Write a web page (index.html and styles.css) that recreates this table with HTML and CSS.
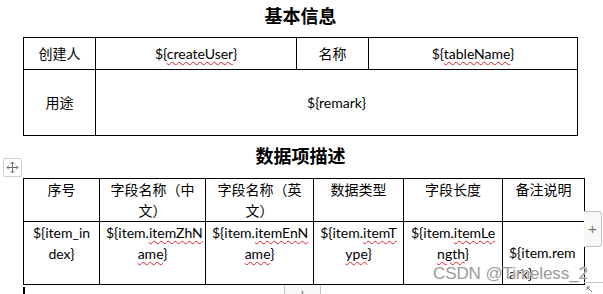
FILE: index.html
```html
<!DOCTYPE html>
<html lang="zh">
<head>
<meta charset="utf-8">
<title>数据项描述</title>
<link rel="stylesheet" href="styles.css">
</head>
<body>
<div class="page">
  <h1 class="doc-title first">基本信息</h1>
  <table class="grid info">
    <colgroup><col class="w72"><col class="w201"><col class="w72"><col class="w209"></colgroup>
    <tr class="row-a">
      <td>创建人</td>
      <td>${<span class="spell">createUser</span>}</td>
      <td>名称</td>
      <td>${<span class="spell">tableName</span>}</td>
    </tr>
    <tr class="row-b">
      <td>用途</td>
      <td colspan="3">${remark}</td>
    </tr>
  </table>

  <h2 class="doc-title second">数据项描述</h2>
  <table class="grid items">
    <colgroup><col class="w76"><col class="w106"><col class="w108"><col class="w90"><col class="w99"><col class="w82"></colgroup>
    <tr class="row-head">
      <th>序号</th>
      <th>字段名称（中<br>文）</th>
      <th>字段名称（英<br>文）</th>
      <th>数据类型</th>
      <th>字段长度</th>
      <th>备注说明</th>
    </tr>
    <tr class="row-body">
      <td>${item_in<br>dex}</td>
      <td>${item.<span class="spell">itemZhN</span><br><span class="spell">ame</span>}</td>
      <td>${item.<span class="spell">itemEnN</span><br><span class="spell">ame</span>}</td>
      <td>${item.<span class="spell">itemT</span><br><span class="spell">ype</span>}</td>
      <td>${item.<span class="spell">itemLe</span><br><span class="spell">ngth</span>}</td>
      <td class="remark">${item.rem<br>ark}</td>
    </tr>
  </table>
  <div class="after-table"><span class="caret"></span></div>

  <span class="move-handle" aria-hidden="true">
    <svg viewBox="0 0 13 13" width="13" height="13"><path d="M6.5 1v11M1 6.5h11M4.5 3l2-2 2 2M4.5 10l2 2 2-2M3 4.5l-2 2 2 2M10 4.5l2 2-2 2" stroke="#6f6f6f" stroke-width="1" fill="none"/></svg>
  </span>
  <button class="add-col" type="button">+</button>
  <button class="add-row" type="button">+</button>
  <span class="tail-line"></span>
  <span class="resize" aria-hidden="true">
    <svg viewBox="0 0 7 7" width="7" height="7"><path d="M1 1l5 5M1 1h3M1 1v3" stroke="#777" stroke-width="1" fill="none"/></svg>
  </span>
  <div class="watermark">CSDN @Timeless_2</div>
</div>
</body>
</html>
```

FILE: styles.css
```css
html, body {
  margin: 0;
  padding: 0;
  background: #fff;
}

.page {
  position: relative;
  width: 603px;
  height: 294px;
  overflow: hidden;
  font-family: Lato, "Noto Sans CJK SC", sans-serif;
  font-size: 14px;
  color: #000;
}

.doc-title {
  margin: 0;
  width: 555px;
  margin-left: 23px;
  font-family: "Noto Sans CJK SC", sans-serif;
  font-weight: 700;
  font-size: 18px;
  line-height: 31px;
  text-align: center;
}

.doc-title.first {
  margin-bottom: 6px;
}

.doc-title.second {
  margin-top: 4px;
  margin-bottom: 7px;
}

.grid {
  border-collapse: collapse;
  table-layout: fixed;
  margin-left: 23px;
}

.grid td,
.grid th {
  border: 1px solid #000;
  padding: 0 6px;
  text-align: center;
  font-weight: 400;
  line-height: 21px;
}

.info { width: 555px; }
.info td { vertical-align: middle; }
.row-a { height: 32px; }
.row-b { height: 66px; }

.w72 { width: 72px; }
.w201 { width: 201px; }
.w209 { width: 209px; }

.items { width: 562px; }
.w76 { width: 76px; }
.w106 { width: 106px; }
.w108 { width: 108px; }
.w90 { width: 90px; }
.w99 { width: 99px; }
.w82 { width: 82px; }

.items th,
.items td { vertical-align: top; }
.row-head { height: 42px; }
.row-body { height: 63px; }
.items td.remark {
  text-align: left;
  vertical-align: bottom;
}

.spell {
  text-decoration: underline wavy #e02020;
  text-decoration-thickness: 1px;
  text-underline-offset: 2px;
}

.after-table {
  height: 12px;
  margin-left: 23px;
  padding-top: 2px;
}

.caret {
  display: block;
  width: 2px;
  height: 10px;
  background: #000;
}

.move-handle {
  position: absolute;
  left: 3px;
  top: 158px;
  width: 17px;
  height: 17px;
  border: 1px solid #cfcfcf;
  border-radius: 2px;
  background: #fff;
  display: flex;
  align-items: center;
  justify-content: center;
}

.add-col {
  position: absolute;
  left: 584px;
  top: 211px;
  width: 18px;
  height: 36px;
  padding: 0;
  border: 1px solid #c4c4c4;
  border-left: none;
  border-radius: 0 4px 4px 0;
  background: #f8f8f8;
  color: #777;
  font-family: "Liberation Sans", sans-serif;
  font-size: 15px;
  line-height: 34px;
}

.add-row {
  position: absolute;
  left: 284px;
  top: 285px;
  width: 37px;
  height: 18px;
  padding: 0;
  border: 1px solid #c4c4c4;
  border-top: none;
  background: #f8f8f8;
  color: #777;
  font-family: "Liberation Sans", sans-serif;
  font-size: 15px;
  line-height: 14px;
}

.tail-line {
  position: absolute;
  left: 584px;
  top: 282px;
  width: 19px;
  height: 1px;
  background: #c8c8c8;
}

.resize {
  position: absolute;
  left: 586px;
  top: 286px;
  width: 7px;
  height: 7px;
  display: block;
  line-height: 0;
}

.watermark {
  position: absolute;
  left: 433px;
  top: 264px;
  font-family: "Liberation Sans", sans-serif;
  font-size: 17px;
  line-height: 20px;
  color: #9a9a9a;
  letter-spacing: -0.1px;
  white-space: nowrap;
  text-shadow: 0 0 1px #fff, 0 0 1px #fff;
}
```
